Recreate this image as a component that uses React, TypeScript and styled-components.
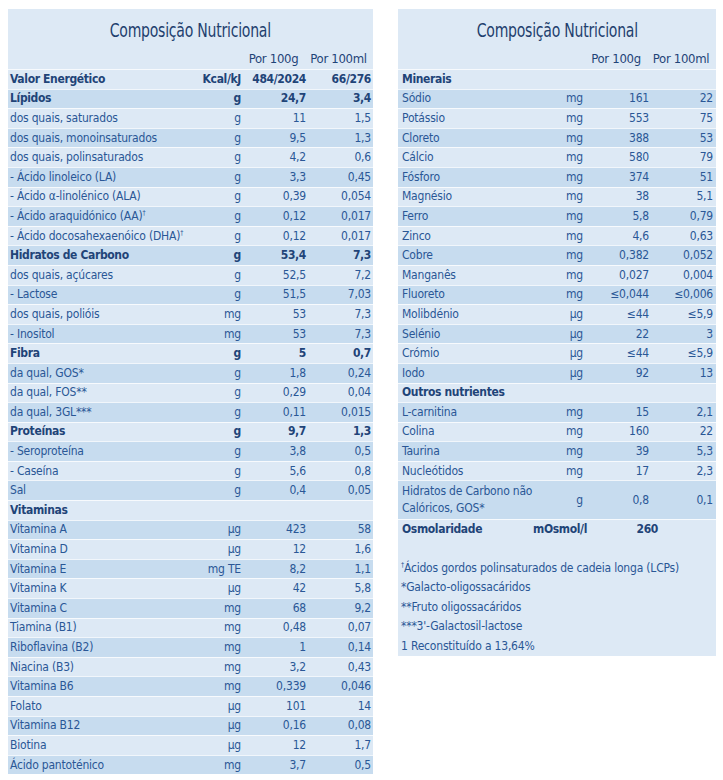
import React from 'react';
import styled, { createGlobalStyle } from 'styled-components';

const GlobalStyle = createGlobalStyle`
  html, body {
    margin: 0;
    padding: 0;
    background: #ffffff;
  }
  body {
    font-family: "Liberation Sans Narrow", "DejaVu Sans Condensed", "Liberation Sans", sans-serif;
    font-stretch: condensed;
    color: #2a5796;
  }
`;

const Page = styled.div`
  display: flex;
  align-items: flex-start;
  gap: 25px;
  padding: 9px 7px 0 8px;
`;

const Panel = styled.section<{ $width: number; $cols: string; $pad: string }>`
  width: ${({ $width }) => $width}px;
  background: #dde9f5;
  --cols: ${({ $cols }) => $cols};
  --pad: ${({ $pad }) => $pad};
`;

const Title = styled.h2`
  margin: 0;
  height: 39px;
  line-height: 42px;
  text-align: center;
  font-size: 20px;
  font-weight: 400;
  color: #1f3f6e;
`;

// the printed face is much narrower than any installed font
const TitleText = styled.span`
  display: inline-block;
  transform: scaleX(0.78);
  letter-spacing: -0.3px;
`;

const HeaderRow = styled.div`
  display: grid;
  grid-template-columns: var(--cols);
  padding: var(--pad);
  height: 21px;
  align-items: center;
  font-size: 13px;
  letter-spacing: -0.3px;
  color: #1f4478;
`;

const HeaderCell = styled.span`
  text-align: center;
`;

const Row = styled.div<{ $dark: boolean; $bold?: boolean; $tall?: boolean }>`
  display: grid;
  grid-template-columns: var(--cols);
  padding: var(--pad);
  box-sizing: border-box;
  height: ${({ $tall }) => ($tall ? '38.5px' : '19.6px')};
  align-items: center;
  border-top: 1px solid rgba(255, 255, 255, 0.75);
  background: ${({ $dark }) => ($dark ? '#c7dcef' : '#dde9f5')};
  font-size: 12px;
  line-height: 17px;
  font-weight: ${({ $bold }) => ($bold ? 700 : 400)};
  letter-spacing: ${({ $bold }) => ($bold ? '-0.35px' : '-0.2px')};
  color: ${({ $bold }) => ($bold ? '#1f4478' : '#2a5796')};
  white-space: nowrap;
`;

const Label = styled.span`
  overflow: visible;
`;

const Unit = styled.span`
  text-align: right;
`;

const Value = styled.span<{ $nudge?: number }>`
  text-align: right;
  margin-right: ${({ $nudge }) => ($nudge ? -$nudge : 0)}px;
`;

const Sup = styled.sup`
  font-size: 7px;
  line-height: 0;
  vertical-align: 5px;
`;

const Notes = styled.div`
  padding: 20px 4px 0 3px;
  font-size: 12px;
  letter-spacing: -0.2px;
  color: #2a5796;
`;

const Note = styled.div`
  height: 19.5px;
  line-height: 19.5px;
  white-space: nowrap;
`;

type Item = {
  label: React.ReactNode;
  unit?: string;
  a?: string;
  b?: string;
  bold?: boolean;
  tall?: boolean;
  nudge?: number;
};

const dag = <Sup>†</Sup>;

const leftRows: Item[] = [
  { label: 'Valor Energético', unit: 'Kcal/kJ', a: '484/2024', b: '66/276', bold: true },
  { label: 'Lípidos', unit: 'g', a: '24,7', b: '3,4', bold: true },
  { label: 'dos quais, saturados', unit: 'g', a: '11', b: '1,5' },
  { label: 'dos quais, monoinsaturados', unit: 'g', a: '9,5', b: '1,3' },
  { label: 'dos quais, polinsaturados', unit: 'g', a: '4,2', b: '0,6' },
  { label: '- Ácido linoleico (LA)', unit: 'g', a: '3,3', b: '0,45' },
  { label: '- Ácido α-linolénico (ALA)', unit: 'g', a: '0,39', b: '0,054' },
  { label: <>- Ácido araquidónico (AA){dag}</>, unit: 'g', a: '0,12', b: '0,017' },
  { label: <>- Ácido docosahexaenóico (DHA){dag}</>, unit: 'g', a: '0,12', b: '0,017' },
  { label: 'Hidratos de Carbono', unit: 'g', a: '53,4', b: '7,3', bold: true },
  { label: 'dos quais, açúcares', unit: 'g', a: '52,5', b: '7,2' },
  { label: '- Lactose', unit: 'g', a: '51,5', b: '7,03' },
  { label: 'dos quais, polióis', unit: 'mg', a: '53', b: '7,3' },
  { label: '- Inositol', unit: 'mg', a: '53', b: '7,3' },
  { label: 'Fibra', unit: 'g', a: '5', b: '0,7', bold: true },
  { label: 'da qual, GOS*', unit: 'g', a: '1,8', b: '0,24' },
  { label: 'da qual, FOS**', unit: 'g', a: '0,29', b: '0,04' },
  { label: 'da qual, 3GL***', unit: 'g', a: '0,11', b: '0,015' },
  { label: 'Proteínas', unit: 'g', a: '9,7', b: '1,3', bold: true },
  { label: '- Seroproteína', unit: 'g', a: '3,8', b: '0,5' },
  { label: '- Caseína', unit: 'g', a: '5,6', b: '0,8' },
  { label: 'Sal', unit: 'g', a: '0,4', b: '0,05' },
  { label: 'Vitaminas', bold: true },
  { label: 'Vitamina A', unit: 'µg', a: '423', b: '58' },
  { label: 'Vitamina D', unit: 'µg', a: '12', b: '1,6' },
  { label: 'Vitamina E', unit: 'mg TE', a: '8,2', b: '1,1' },
  { label: 'Vitamina K', unit: 'µg', a: '42', b: '5,8' },
  { label: 'Vitamina C', unit: 'mg', a: '68', b: '9,2' },
  { label: 'Tiamina (B1)', unit: 'mg', a: '0,48', b: '0,07' },
  { label: 'Riboflavina (B2)', unit: 'mg', a: '1', b: '0,14' },
  { label: 'Niacina (B3)', unit: 'mg', a: '3,2', b: '0,43' },
  { label: 'Vitamina B6', unit: 'mg', a: '0,339', b: '0,046' },
  { label: 'Folato', unit: 'µg', a: '101', b: '14' },
  { label: 'Vitamina B12', unit: 'µg', a: '0,16', b: '0,08' },
  { label: 'Biotina', unit: 'µg', a: '12', b: '1,7' },
  { label: 'Ácido pantoténico', unit: 'mg', a: '3,7', b: '0,5' },
];

const rightRows: Item[] = [
  { label: 'Minerais', bold: true },
  { label: 'Sódio', unit: 'mg', a: '161', b: '22' },
  { label: 'Potássio', unit: 'mg', a: '553', b: '75' },
  { label: 'Cloreto', unit: 'mg', a: '388', b: '53' },
  { label: 'Cálcio', unit: 'mg', a: '580', b: '79' },
  { label: 'Fósforo', unit: 'mg', a: '374', b: '51' },
  { label: 'Magnésio', unit: 'mg', a: '38', b: '5,1' },
  { label: 'Ferro', unit: 'mg', a: '5,8', b: '0,79' },
  { label: 'Zinco', unit: 'mg', a: '4,6', b: '0,63' },
  { label: 'Cobre', unit: 'mg', a: '0,382', b: '0,052' },
  { label: 'Manganês', unit: 'mg', a: '0,027', b: '0,004' },
  { label: 'Fluoreto', unit: 'mg', a: '≤0,044', b: '≤0,006' },
  { label: 'Molibdénio', unit: 'µg', a: '≤44', b: '≤5,9' },
  { label: 'Selénio', unit: 'µg', a: '22', b: '3' },
  { label: 'Crómio', unit: 'µg', a: '≤44', b: '≤5,9' },
  { label: 'Iodo', unit: 'µg', a: '92', b: '13' },
  { label: 'Outros nutrientes', bold: true },
  { label: 'L-carnitina', unit: 'mg', a: '15', b: '2,1' },
  { label: 'Colina', unit: 'mg', a: '160', b: '22' },
  { label: 'Taurina', unit: 'mg', a: '39', b: '5,3' },
  { label: 'Nucleótidos', unit: 'mg', a: '17', b: '2,3' },
  {
    label: (
      <>
        Hidratos de Carbono não
        <br />
        Calóricos, GOS*
      </>
    ),
    unit: 'g',
    a: '0,8',
    b: '0,1',
    tall: true,
  },
  { label: 'Osmolaridade', unit: 'mOsmol/l', a: '260', bold: true, nudge: 9 },
];

const NutritionTable = ({ rows }: { rows: Item[] }) => (
  <>
    <Title>
      <TitleText>Composição Nutricional</TitleText>
    </Title>
    <HeaderRow>
      <span />
      <span />
      <HeaderCell>Por 100g</HeaderCell>
      <HeaderCell>Por 100ml</HeaderCell>
    </HeaderRow>
    {rows.map((r, i) => (
      <Row key={i} $dark={i % 2 === 1} $bold={r.bold} $tall={r.tall}>
        <Label>{r.label}</Label>
        <Unit>{r.unit}</Unit>
        <Value $nudge={r.nudge}>{r.a}</Value>
        <Value>{r.b}</Value>
      </Row>
    ))}
  </>
);

const App = () => (
  <>
    <GlobalStyle />
    <Page>
      <Panel $width={365} $cols="181px 50px 65px 65px" $pad="0 2px 0 2px">
        <NutritionTable rows={leftRows} />
      </Panel>
      <Panel $width={318} $cols="131px 50px 66px 64px" $pad="0 3px 0 4px">
        <NutritionTable rows={rightRows} />
        <Notes>
          <Note>
            <Sup>†</Sup>Ácidos gordos polinsaturados de cadeia longa (LCPs)
          </Note>
          <Note>*Galacto-oligossacáridos</Note>
          <Note>**Fruto oligossacáridos</Note>
          <Note>***3'-Galactosil-lactose</Note>
          <Note>1 Reconstituído a 13,64%</Note>
        </Notes>
      </Panel>
    </Page>
  </>
);

export default App;
